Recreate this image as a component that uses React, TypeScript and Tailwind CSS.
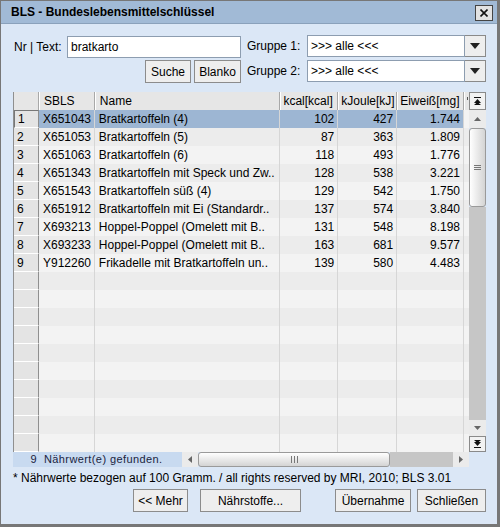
import React from 'react';

const rows = [
  ['1', 'X651043', 'Bratkartoffeln (4)', '102', '427', '1.744'],
  ['2', 'X651053', 'Bratkartoffeln (5)', '87', '363', '1.809'],
  ['3', 'X651063', 'Bratkartoffeln (6)', '118', '493', '1.776'],
  ['4', 'X651343', 'Bratkartoffeln mit Speck und Zw..', '128', '538', '3.221'],
  ['5', 'X651543', 'Bratkartoffeln süß (4)', '129', '542', '1.750'],
  ['6', 'X651912', 'Bratkartoffeln mit Ei (Standardr..', '137', '574', '3.840'],
  ['7', 'X693213', 'Hoppel-Poppel (Omelett mit B..', '131', '548', '8.198'],
  ['8', 'X693233', 'Hoppel-Poppel (Omelett mit B..', '163', '681', '9.577'],
  ['9', 'Y912260', 'Frikadelle mit Bratkartoffeln un..', '139', '580', '4.483'],
];

function Combo() {
  return (
    <div className="flex h-[22px] w-[179px]">
      <div className="flex flex-1 items-center border border-[#8d9db0] bg-white pl-[3px]">&gt;&gt;&gt; alle &lt;&lt;&lt;</div>
      <div className="flex w-[21px] items-center justify-center border border-l-0 border-[#8a8a8a] bg-[#eeeeee]">
        <svg width="10" height="6" viewBox="0 0 10 6"><path d="M0 0h10L5 6z" fill="#222" /></svg>
      </div>
    </div>
  );
}

function Btn({ label, w }: { label: string; w: string }) {
  return (
    <button className={`flex h-[23px] ${w} items-center justify-center border border-[#8c8c8c] bg-[#eeeeee] text-[12px] text-black`}>
      {label}
    </button>
  );
}

function Tri({ dir, color = '#666' }: { dir: 'up' | 'down' | 'left' | 'right'; color?: string }) {
  const d = {
    up: 'M0 4L3.5 0L7 4z',
    down: 'M0 0h7L3.5 4z',
    left: 'M4 0v7L0 3.5z',
    right: 'M0 0v7L4 3.5z',
  }[dir];
  const vertical = dir === 'up' || dir === 'down';
  return (
    <svg width={vertical ? 7 : 4} height={vertical ? 4 : 7} viewBox={vertical ? '0 0 7 4' : '0 0 4 7'}>
      <path d={d} fill={color} />
    </svg>
  );
}

export default function App() {
  const empty = Array.from({ length: 10 });
  return (
    <div className="flex h-[527px] w-[500px] flex-col border border-r-[3px] border-b-[3px] border-[#777] bg-[#dbe7f6] font-['Liberation_Sans',Arial,sans-serif] text-[12px] text-black">
      {/* title bar */}
      <div className="flex h-[23px] shrink-0 items-center justify-between border-b border-[#8aa1bb] bg-[#a1bad6] pl-[10px] pr-[4px]">
        <span className="text-[12px] font-bold">BLS - Bundeslebensmittelschlüssel</span>
        <div className="mt-[2px] flex h-[16px] w-[18px] items-center justify-center border border-[#444] bg-[#e2e2e2]">
          <svg width="8" height="8" viewBox="0 0 8 8"><path d="M0.5 0.5L7.5 7.5M7.5 0.5L0.5 7.5" stroke="#111" strokeWidth="1.6" /></svg>
        </div>
      </div>

      <div className="flex flex-1 flex-col pl-[12px] pt-[11px]">
        {/* search rows */}
        <div className="flex">
          <div className="flex w-[229px] flex-col">
            <div className="flex h-[23px] items-center">
              <span className="w-[54px] pl-[1px]">Nr | Text:</span>
              <div className="flex h-[22px] w-[174px] items-center border border-[#8d9db0] bg-white pl-[3px]">bratkarto</div>
            </div>
            <div className="mt-[2px] flex justify-end gap-[3px] pr-[1px]">
              <Btn label="Suche" w="w-[46px]" />
              <Btn label="Blanko" w="w-[47px]" />
            </div>
          </div>
          <div className="ml-[5px] flex flex-col">
            <div className="flex h-[22px] items-center">
              <span className="w-[60px]">Gruppe 1:</span>
              <Combo />
            </div>
            <div className="mt-[3px] flex h-[22px] items-center">
              <span className="w-[60px]">Gruppe 2:</span>
              <Combo />
            </div>
          </div>
        </div>

        {/* table */}
        <div className="mt-[9px] flex flex-col">
          <div className="flex">
            <div className="flex h-[360px] w-[456px] flex-col overflow-hidden border-l border-[#8f8f8f]">
              <div className="flex h-[18px] shrink-0 bg-[#e6e6e6]">
                <div className="w-[25px] border-r border-[#a8a8a8]" />
                <div className="w-[56px] border-r border-l border-r-[#a8a8a8] border-l-white pl-[4px] leading-[18px]">SBLS</div>
                <div className="w-[186px] border-r border-l border-r-[#a8a8a8] border-l-white pl-[4px] leading-[18px]">Name</div>
                <div className="w-[58px] border-r border-l border-r-[#a8a8a8] border-l-white pl-[2px] leading-[18px]">kcal[kcal]</div>
                <div className="w-[59px] border-r border-l border-r-[#a8a8a8] border-l-white pl-[2px] leading-[18px]">kJoule[kJ]</div>
                <div className="w-[67px] border-r border-l border-r-[#a8a8a8] border-l-white pl-[2px] leading-[18px]">Eiweiß[mg]</div>
                <div className="flex w-[5px] border-l border-l-white pl-[2px] pt-[5px]">
                  <div className="h-[3px] w-[1px] bg-[#555]" />
                </div>
              </div>
              {rows.map((r, i) => {
                const sel = i === 0;
                const bg = sel ? 'bg-[#9db6d3]' : i % 2 === 1 ? 'bg-[#ececec]' : 'bg-[#f3f3f3]';
                return (
                  <div key={r[0]} className="flex h-[18px] shrink-0 leading-[18px]">
                    <div className={`w-[25px] border-b border-r border-b-white border-r-[#8f8f8f] bg-[#e4e4e4] pl-[3px] ${sel ? 'border-l border-t border-l-[#777] border-t-[#777] leading-[16px]' : ''}`}>{r[0]}</div>
                    <div className={`w-[56px] border-r border-[#d6d6d6] pl-[4px] ${bg}`}>{r[1]}</div>
                    <div className={`w-[186px] overflow-hidden whitespace-nowrap border-r border-[#d6d6d6] pl-[4px] ${bg}`}>{r[2]}</div>
                    <div className={`w-[58px] border-r border-[#d6d6d6] pr-[3px] text-right ${bg}`}>{r[3]}</div>
                    <div className={`w-[59px] border-r border-[#d6d6d6] pr-[3px] text-right ${bg}`}>{r[4]}</div>
                    <div className={`w-[67px] border-r border-[#d6d6d6] pr-[3px] text-right ${bg}`}>{r[5]}</div>
                    <div className={`w-[5px] ${i % 2 === 1 ? 'bg-[#ececec]' : 'bg-[#f3f3f3]'}`} />
                  </div>
                );
              })}
              {empty.map((_, j) => {
                const bg = (j + 9) % 2 === 1 ? 'bg-[#ececec]' : 'bg-[#f3f3f3]';
                return (
                  <div key={j} className="flex h-[18px] shrink-0">
                    <div className="w-[25px] border-b border-r border-b-white border-r-[#8f8f8f] bg-[#e4e4e4]" />
                    <div className={`w-[56px] border-r border-[#d6d6d6] ${bg}`} />
                    <div className={`w-[186px] border-r border-[#d6d6d6] ${bg}`} />
                    <div className={`w-[58px] border-r border-[#d6d6d6] ${bg}`} />
                    <div className={`w-[59px] border-r border-[#d6d6d6] ${bg}`} />
                    <div className={`w-[67px] border-r border-[#d6d6d6] ${bg}`} />
                    <div className={`w-[5px] ${bg}`} />
                  </div>
                );
              })}
            </div>

            {/* vertical scrollbar */}
            <div className="flex h-[360px] w-[17px] flex-col">
              <div className="flex h-[18px] items-center justify-center border border-[#8a8a8a] bg-[#f2f2f2]">
                <svg width="7" height="8" viewBox="0 0 7 8"><path d="M0 0.5h7" stroke="#111" /><path d="M0 6L3.5 2L7 6z" fill="#111" /><path d="M0 8L3.5 5L7 8z" fill="#111" /></svg>
              </div>
              <div className="flex h-[18px] items-center justify-center bg-[#ebebeb]"><Tri dir="up" /></div>
              <div className="flex h-[79px] items-center justify-center rounded-[3px] border border-[#9a9a9a] bg-gradient-to-r from-white to-[#d4d4d4]">
                <svg width="7" height="5" viewBox="0 0 7 5"><path d="M0 0.5h7M0 2.5h7M0 4.5h7" stroke="#777" /></svg>
              </div>
              <div className="h-[213px] bg-[#c6c6c6]" />
              <div className="flex h-[16px] items-center justify-center bg-[#ebebeb]"><Tri dir="down" /></div>
              <div className="flex h-[16px] items-center justify-center border border-[#8a8a8a] bg-[#f2f2f2]">
                <svg width="7" height="8" viewBox="0 0 7 8"><path d="M0 0L3.5 3L7 0z" fill="#111" /><path d="M0 2L3.5 6L7 2z" fill="#111" /><path d="M0 7.5h7" stroke="#111" /></svg>
              </div>
            </div>
          </div>

          <div className="flex h-[15px]">
            <div className="flex w-[167px] items-center justify-center bg-[#c8daf0] text-[11px] tracking-[0.4px] text-[#1a2440]">
              9&nbsp;&nbsp;Nährwert(e) gefunden.
            </div>
            <div className="flex w-[289px]">
              <div className="flex w-[18px] items-center justify-center border-l-[2px] border-[#c8daf0] bg-[#ebebeb]"><Tri dir="left" /></div>
              <div className="flex w-[192px] items-center justify-center rounded-[3px] border border-[#9a9a9a] bg-gradient-to-b from-white to-[#d4d4d4]">
                <svg width="7" height="7" viewBox="0 0 7 7"><path d="M0.5 0v7M3.5 0v7M6.5 0v7" stroke="#777" /></svg>
              </div>
              <div className="w-[63px] bg-[#c6c6c6]" />
              <div className="flex w-[16px] items-center justify-center bg-[#ebebeb]"><Tri dir="right" /></div>
            </div>
          </div>
        </div>

        <div className="mt-[4px] h-[14px] leading-[14px]">* Nährwerte bezogen auf 100 Gramm. / all rights reserved by MRI, 2010; BLS 3.01</div>

        <div className="mt-[4px] flex pl-[120px]">
          <Btn label="<< Mehr" w="w-[55px]" />
          <div className="ml-[12px]"><Btn label="Nährstoffe..." w="w-[101px]" /></div>
          <div className="ml-[34px]"><Btn label="Übernahme" w="w-[76px]" /></div>
          <div className="ml-[6px]"><Btn label="Schließen" w="w-[69px]" /></div>
        </div>
      </div>
    </div>
  );
}
